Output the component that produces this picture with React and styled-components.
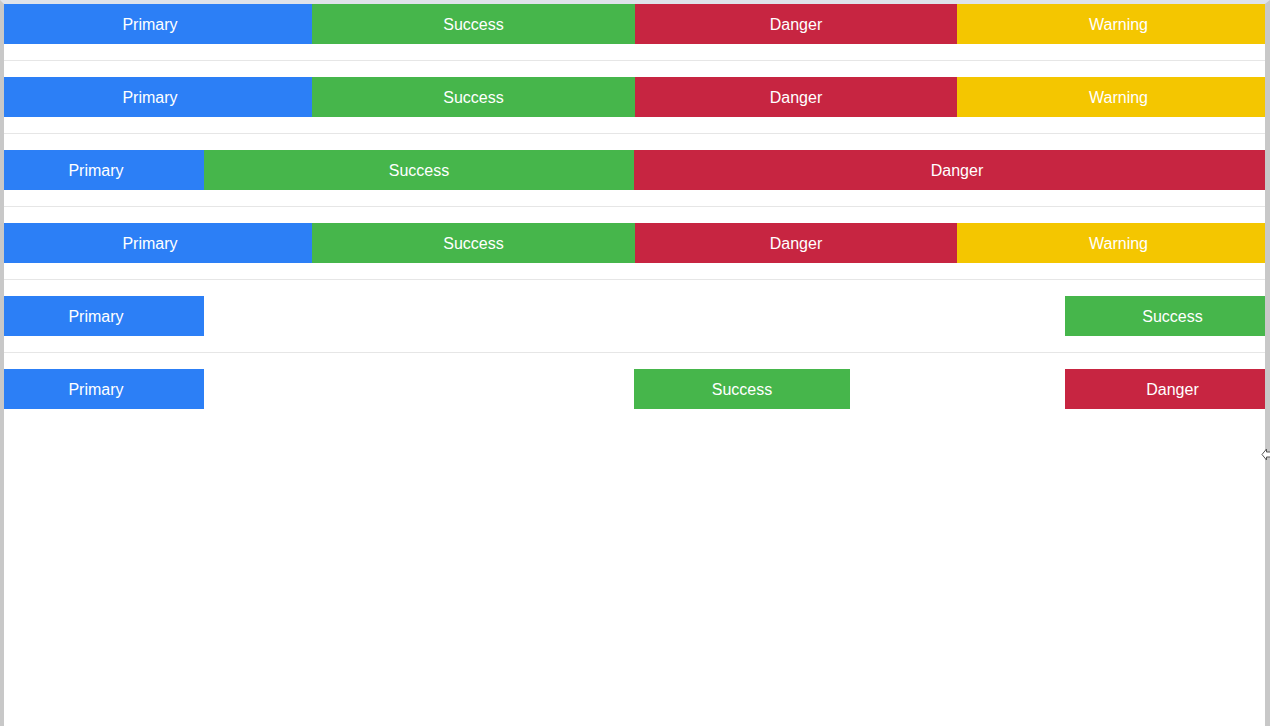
import React from "react";
import styled, { createGlobalStyle } from "styled-components";

const GlobalStyle = createGlobalStyle`
  html, body {
    margin: 0;
    padding: 0;
    background: #ffffff;
  }
  body {
    font-family: "Helvetica Neue", "Liberation Sans", Arial, sans-serif;
  }
`;

const colors = {
  primary: "#2c7ff6",
  success: "#46b64b",
  danger: "#c72541",
  warning: "#f4c600",
};

const rows = [
  {
    cols: "308px 323px 322px 1fr",
    items: [
      { label: "Primary", kind: "primary" },
      { label: "Success", kind: "success" },
      { label: "Danger", kind: "danger" },
      { label: "Warning", kind: "warning" },
    ],
  },
  {
    cols: "308px 323px 322px 1fr",
    items: [
      { label: "Primary", kind: "primary" },
      { label: "Success", kind: "success" },
      { label: "Danger", kind: "danger" },
      { label: "Warning", kind: "warning" },
    ],
  },
  {
    cols: "200px 430px 1fr",
    items: [
      { label: "Primary", kind: "primary" },
      { label: "Success", kind: "success" },
      { label: "Danger", kind: "danger" },
    ],
  },
  {
    cols: "308px 323px 322px 1fr",
    items: [
      { label: "Primary", kind: "primary" },
      { label: "Success", kind: "success" },
      { label: "Danger", kind: "danger" },
      { label: "Warning", kind: "warning" },
    ],
  },
  {
    cols: "200px 1fr 200px",
    items: [
      { label: "Primary", kind: "primary" },
      null,
      { label: "Success", kind: "success" },
    ],
  },
  {
    cols: "200px 430px 216px 215px 200px",
    items: [
      { label: "Primary", kind: "primary" },
      null,
      { label: "Success", kind: "success" },
      null,
      { label: "Danger", kind: "danger" },
    ],
  },
];

function App() {
  return (
    <>
      <GlobalStyle />
      <Frame>
        <Content>
          {rows.map((row, i) => (
            <Section key={i} $last={i === rows.length - 1}>
              <Row $cols={row.cols}>
                {row.items.map((item, j) =>
                  item ? (
                    <Cell key={j} $bg={colors[item.kind]}>
                      {item.label}
                    </Cell>
                  ) : (
                    <Gap key={j} />
                  )
                )}
              </Row>
            </Section>
          ))}
        </Content>
        <ResizeHandle>
          <svg width="10" height="13" viewBox="0 0 10 13">
            <path
              d="M5.5 1 L1 6.5 L5.5 12 L5.5 9 L9.5 9 L9.5 4 L5.5 4 Z"
              fill="#ffffff"
              stroke="#555"
              strokeWidth="1"
            />
          </svg>
        </ResizeHandle>
      </Frame>
    </>
  );
}

const Frame = styled.div`
  position: relative;
  box-sizing: border-box;
  width: 1270px;
  height: 726px;
  border-left: 4px solid #c8c8c8;
  border-right: 5px solid #c8c8c8;
  border-top: 4px solid #dfe3ea;
  background: #ffffff;
`;

const Content = styled.div`
  display: flex;
  flex-direction: column;
`;

const Section = styled.div`
  padding-bottom: ${(p) => (p.$last ? "0" : "16px")};
  margin-bottom: ${(p) => (p.$last ? "0" : "16px")};
  border-bottom: ${(p) => (p.$last ? "none" : "1px solid #e6e6e6")};
`;

const Row = styled.div`
  display: grid;
  grid-template-columns: ${(p) => p.$cols};
  height: 40px;
`;

const Cell = styled.div`
  display: flex;
  align-items: center;
  justify-content: center;
  padding-top: 1px;
  background: ${(p) => p.$bg};
  color: #ffffff;
  font-size: 16px;

  &:first-child {
    padding-right: 16px;
  }

  &:last-child {
    padding-left: 15px;
  }
`;

const Gap = styled.div``;

const ResizeHandle = styled.div`
  position: absolute;
  right: -6px;
  top: 444px;
  display: flex;
`;

export default App;
